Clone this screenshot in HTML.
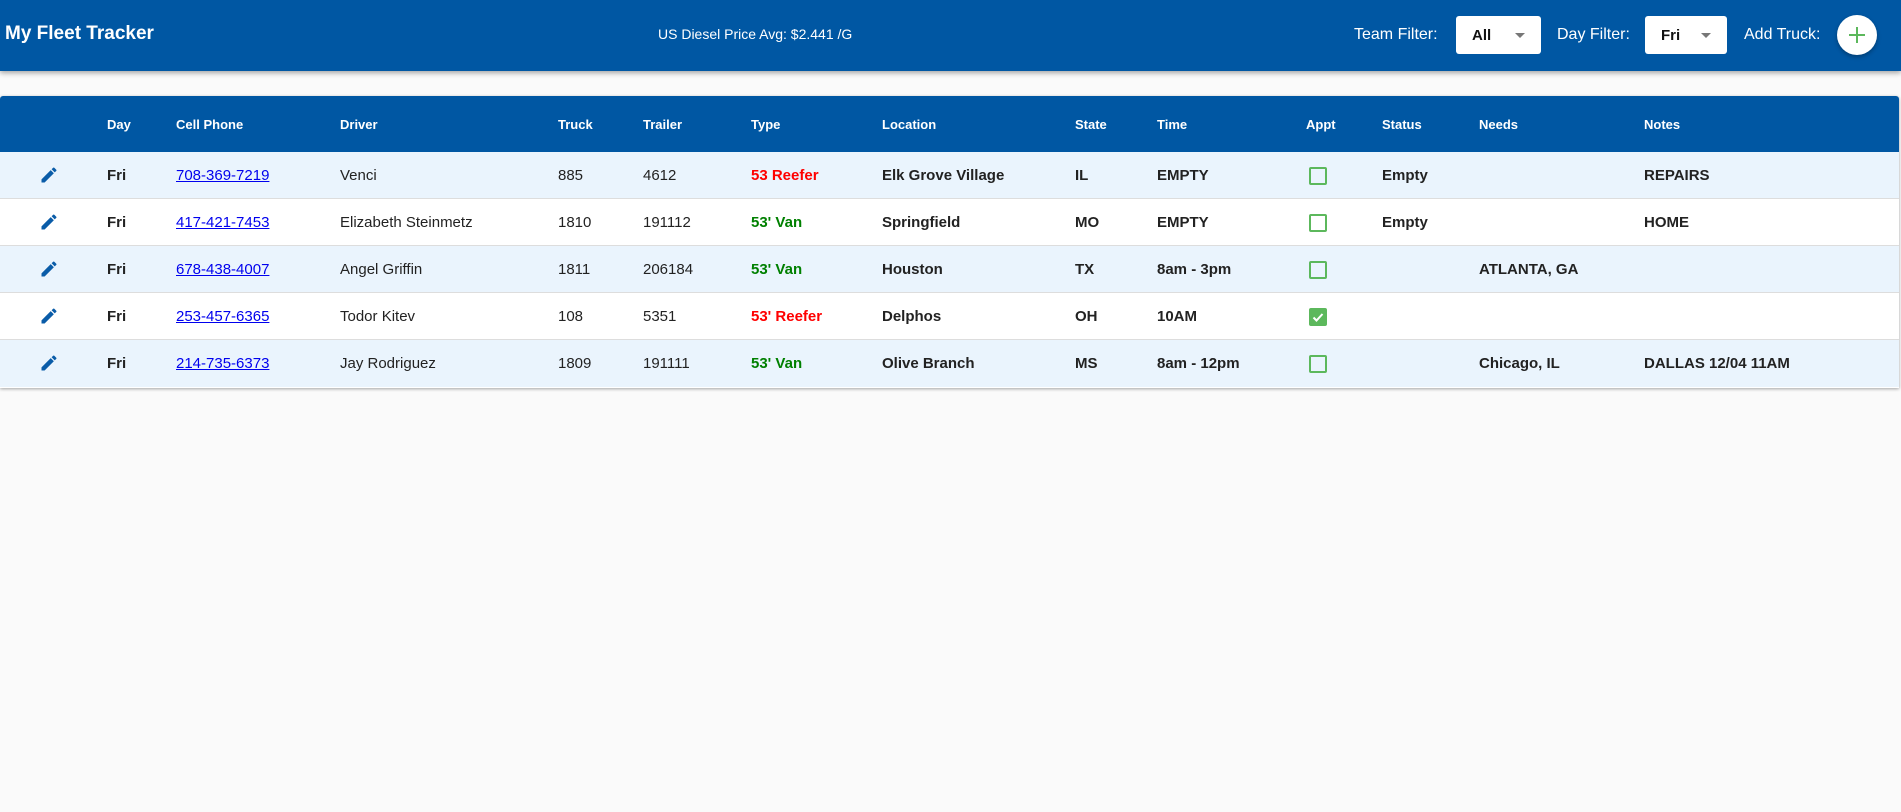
<!DOCTYPE html>
<html><head><meta charset="utf-8">
<style>
*{box-sizing:border-box;margin:0;padding:0}
body{width:1901px;height:812px;background:#fafafa;font-family:"Liberation Sans",Arial,sans-serif;position:relative;overflow:hidden;color:#222}
.top{position:absolute;left:0;top:0;width:1901px;height:71px;background:#0057a3;box-shadow:0 2px 5px rgba(0,0,0,.35);color:#fff}
.top .t{position:absolute;left:5px;top:23px;font-size:19px;font-weight:bold}
.top .d{position:absolute;left:658px;top:26px;font-size:14px}
.lbl{position:absolute;top:26px;font-size:16px}
.sel{position:absolute;top:16px;height:38px;background:#fff;border-radius:3px;color:#111;font-weight:bold;font-size:15px;padding:11px 0 0 16px}
.sel:after{content:"";position:absolute;right:16px;top:17px;border:5px solid transparent;border-top:5px solid #777;border-bottom:0}
.add{position:absolute;left:1837px;top:15px;width:40px;height:40px;border-radius:50%;background:#fff;box-shadow:0 2px 4px rgba(0,0,0,.3)}
.add:before,.add:after{content:"";position:absolute;background:#5cb85c}
.add:before{left:12px;top:19px;width:16px;height:2px}
.add:after{left:19px;top:12px;width:2px;height:16px}
.tbl{position:absolute;left:0;top:96px;width:1899px;height:292px;background:#fff;border-radius:3px 3px 0 0;box-shadow:0 1px 3px rgba(0,0,0,.35);overflow:hidden}
.hd{height:56px;background:#0057a3;color:#fff;font-size:13px;font-weight:bold;position:relative}
.hd span{position:absolute;top:21px}
.r{height:47px;position:relative;border-bottom:1px solid #ddd;font-size:15px}
.r:nth-child(odd){background:#eaf4fd}
.r span{position:absolute;top:15px;white-space:nowrap}
.b{font-weight:bold}
a{color:#0000ee;text-decoration:underline}
.red{color:#f00;font-weight:bold}.grn{color:#008000;font-weight:bold}
.cb{position:absolute;left:1309px;top:15px;width:18px;height:18px;border:2px solid #5cb85c;border-radius:2px}
.cb.on{background:#5cb85c}
.pen{position:absolute;left:39px;top:13px}
</style></head><body>
<div class="top">
<div class="t">My Fleet Tracker</div>
<div class="d">US Diesel Price Avg: $2.441 /G</div>
<div class="lbl" style="left:1354px">Team Filter:</div>
<div class="sel" style="left:1456px;width:85px">All</div>
<div class="lbl" style="left:1557px">Day Filter:</div>
<div class="sel" style="left:1645px;width:82px">Fri</div>
<div class="lbl" style="left:1744px">Add Truck:</div>
<div class="add"></div>
</div>
<div class="tbl">
<div class="hd"><span style="left:107px">Day</span><span style="left:176px">Cell Phone</span><span style="left:340px">Driver</span><span style="left:558px">Truck</span><span style="left:643px">Trailer</span><span style="left:751px">Type</span><span style="left:882px">Location</span><span style="left:1075px">State</span><span style="left:1157px">Time</span><span style="left:1306px">Appt</span><span style="left:1382px">Status</span><span style="left:1479px">Needs</span><span style="left:1644px">Notes</span></div>
<div>
<div class="r"><svg class="pen" width="20" height="20" viewBox="0 0 24 24"><path fill="#0a5ca8" d="M3 17.25V21h3.75L17.81 9.94l-3.75-3.75L3 17.25zM20.71 7.04a1 1 0 0 0 0-1.41l-2.34-2.34a1 1 0 0 0-1.41 0l-1.83 1.83 3.75 3.75 1.83-1.83z"/></svg><span class="b" style="left:107px">Fri</span><span style="left:176px"><a>708-369-7219</a></span><span style="left:340px">Venci</span><span style="left:558px">885</span><span style="left:643px">4612</span><span class="red" style="left:751px">53 Reefer</span><span class="b" style="left:882px">Elk Grove Village</span><span class="b" style="left:1075px">IL</span><span class="b" style="left:1157px">EMPTY</span><div class="cb"></div><span class="b" style="left:1382px">Empty</span><span class="b" style="left:1644px">REPAIRS</span></div>
<div class="r"><svg class="pen" width="20" height="20" viewBox="0 0 24 24"><path fill="#0a5ca8" d="M3 17.25V21h3.75L17.81 9.94l-3.75-3.75L3 17.25zM20.71 7.04a1 1 0 0 0 0-1.41l-2.34-2.34a1 1 0 0 0-1.41 0l-1.83 1.83 3.75 3.75 1.83-1.83z"/></svg><span class="b" style="left:107px">Fri</span><span style="left:176px"><a>417-421-7453</a></span><span style="left:340px">Elizabeth Steinmetz</span><span style="left:558px">1810</span><span style="left:643px">191112</span><span class="grn" style="left:751px">53' Van</span><span class="b" style="left:882px">Springfield</span><span class="b" style="left:1075px">MO</span><span class="b" style="left:1157px">EMPTY</span><div class="cb"></div><span class="b" style="left:1382px">Empty</span><span class="b" style="left:1644px">HOME</span></div>
<div class="r"><svg class="pen" width="20" height="20" viewBox="0 0 24 24"><path fill="#0a5ca8" d="M3 17.25V21h3.75L17.81 9.94l-3.75-3.75L3 17.25zM20.71 7.04a1 1 0 0 0 0-1.41l-2.34-2.34a1 1 0 0 0-1.41 0l-1.83 1.83 3.75 3.75 1.83-1.83z"/></svg><span class="b" style="left:107px">Fri</span><span style="left:176px"><a>678-438-4007</a></span><span style="left:340px">Angel Griffin</span><span style="left:558px">1811</span><span style="left:643px">206184</span><span class="grn" style="left:751px">53' Van</span><span class="b" style="left:882px">Houston</span><span class="b" style="left:1075px">TX</span><span class="b" style="left:1157px">8am - 3pm</span><div class="cb"></div><span class="b" style="left:1479px">ATLANTA, GA</span></div>
<div class="r"><svg class="pen" width="20" height="20" viewBox="0 0 24 24"><path fill="#0a5ca8" d="M3 17.25V21h3.75L17.81 9.94l-3.75-3.75L3 17.25zM20.71 7.04a1 1 0 0 0 0-1.41l-2.34-2.34a1 1 0 0 0-1.41 0l-1.83 1.83 3.75 3.75 1.83-1.83z"/></svg><span class="b" style="left:107px">Fri</span><span style="left:176px"><a>253-457-6365</a></span><span style="left:340px">Todor Kitev</span><span style="left:558px">108</span><span style="left:643px">5351</span><span class="red" style="left:751px">53' Reefer</span><span class="b" style="left:882px">Delphos</span><span class="b" style="left:1075px">OH</span><span class="b" style="left:1157px">10AM</span><div class="cb on"><svg width="14" height="14" viewBox="0 0 14 14" style="position:absolute;left:0;top:0"><path d="M2.5 7.5l3 3 6-6.5" stroke="#fff" stroke-width="2" fill="none"/></svg></div></div>
<div class="r" style="border-bottom:0"><svg class="pen" width="20" height="20" viewBox="0 0 24 24"><path fill="#0a5ca8" d="M3 17.25V21h3.75L17.81 9.94l-3.75-3.75L3 17.25zM20.71 7.04a1 1 0 0 0 0-1.41l-2.34-2.34a1 1 0 0 0-1.41 0l-1.83 1.83 3.75 3.75 1.83-1.83z"/></svg><span class="b" style="left:107px">Fri</span><span style="left:176px"><a>214-735-6373</a></span><span style="left:340px">Jay Rodriguez</span><span style="left:558px">1809</span><span style="left:643px">191111</span><span class="grn" style="left:751px">53' Van</span><span class="b" style="left:882px">Olive Branch</span><span class="b" style="left:1075px">MS</span><span class="b" style="left:1157px">8am - 12pm</span><div class="cb"></div><span class="b" style="left:1479px">Chicago, IL</span><span class="b" style="left:1644px">DALLAS 12/04 11AM</span></div>
</div>
</div>
</body></html>
